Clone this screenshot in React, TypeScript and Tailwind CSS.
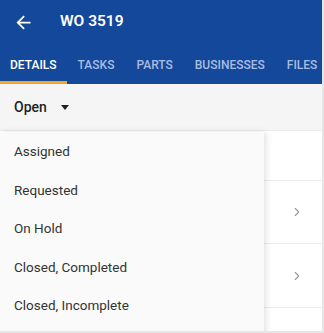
import { ChevronRight } from "lucide-react";

const tabs = ["Details", "Tasks", "Parts", "Businesses", "Files"];
const statuses = ["Assigned", "Requested", "On Hold", "Closed, Completed", "Closed, Incomplete"];

export default function App() {
  return (
    <div
      className="relative w-[324px] h-[333px] overflow-hidden bg-white border-r-2 border-b-2 border-[#e6e6e6]"
      style={{ fontFamily: "Roboto, 'Noto Sans', sans-serif" }}
    >
      <header className="bg-[#13489b]">
        <div className="flex items-center h-[44px] pl-[13px]">
          <svg width="21" height="21" viewBox="0 0 24 24" fill="white">
            <path d="M20 11H7.83l5.59-5.59L12 4l-8 8 8 8 1.41-1.41L7.83 13H20v-2z" />
          </svg>
          <h1 className="ml-[26px] text-[15.5px] font-semibold text-white">WO 3519</h1>
        </div>
        <nav className="flex h-[40px] pt-[4px]">
          {tabs.map((t, i) => (
            <div
              key={t}
              className={
                "flex items-center text-[12px] font-medium uppercase border-b-[3px] " +
                (i === 0
                  ? "text-white border-[#f5a623] px-[10px]"
                  : "text-[#a9bde2] border-transparent px-[11px]")
              }
            >
              {t}
            </div>
          ))}
        </nav>
      </header>

      <div className="flex items-center h-[47px] pl-[14px] bg-[#f5f5f5] border-b border-[#ececec]">
        <span className="text-[14px] font-medium text-[#222]">Open</span>
        <span className="ml-[14px] w-0 h-0 border-l-[4px] border-r-[4px] border-t-[5px] border-l-transparent border-r-transparent border-t-[#222]" />
      </div>

      <div className="bg-white">
        <div className="h-[50px] border-b border-[#ececec]" />
        <div className="h-[63px] border-b border-[#ececec] flex items-center justify-end pr-[18px]">
          <ChevronRight size={14} className="text-[#9e9e9e]" />
        </div>
        <div className="h-[64px] border-b border-[#ececec] flex items-center justify-end pr-[18px]">
          <ChevronRight size={14} className="text-[#9e9e9e]" />
        </div>
        <div className="h-[50px]" />
      </div>

      <ul className="absolute left-0 top-[132px] w-[264px] h-[210px] bg-[#fafafa] shadow-[2px_0_6px_rgba(0,0,0,0.12)]">
        {statuses.map((s) => (
          <li key={s} className="flex items-center h-[38.5px] pl-[14px] text-[13.5px] text-[#333]">
            {s}
          </li>
        ))}
      </ul>
    </div>
  );
}
